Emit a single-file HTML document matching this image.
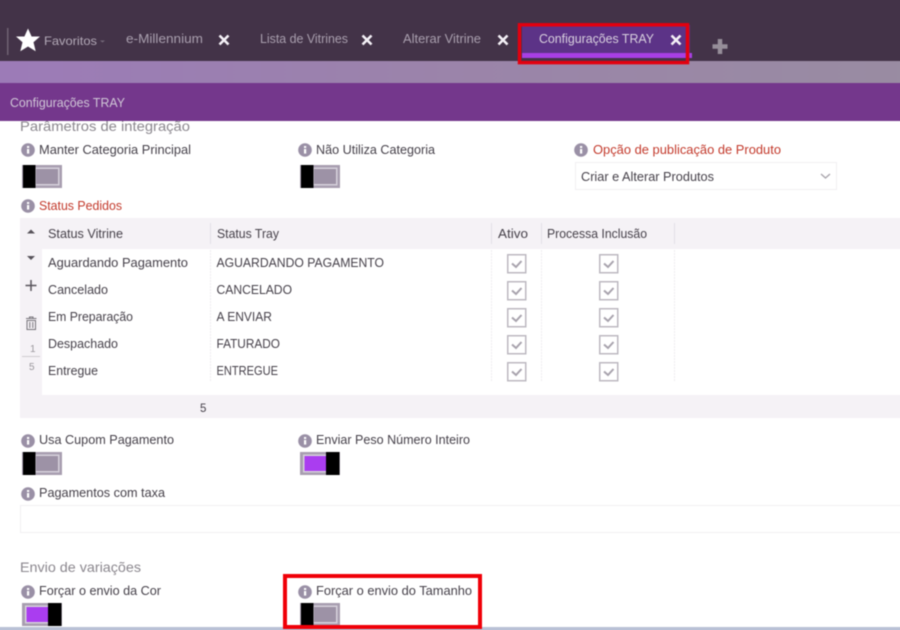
<!DOCTYPE html>
<html lang="pt"><head><meta charset="utf-8"><title>Configurações TRAY</title>
<style>
html,body{margin:0;padding:0;background:#fff;width:900px;height:630px;overflow:hidden}
svg{display:block;overflow:hidden}
.b{filter:blur(.45px)}
text{font-family:"Liberation Sans",sans-serif;font-size:12.5px;fill:#46414a}
.r{fill:#c33a2c}
.h{font-size:14px;fill:#8b878e}
.w{fill:#cfc6d6}
</style></head><body>
<svg width="900" height="630" viewBox="0 0 900 630" xmlns="http://www.w3.org/2000/svg">
<defs>
<linearGradient id="band" x1="0" x2="1" y1="0" y2="0"><stop offset="0" stop-color="#9c7bb8"/><stop offset=".5" stop-color="#9b84aa"/><stop offset="1" stop-color="#998ca2"/></linearGradient>
<g id="i"><circle r="6.800" fill="#9a90a6"/><rect x="-1" y="-1" width="2.200" height="4.600" fill="#fff"/><rect x="-1" y="-4" width="2.200" height="2" fill="#fff"/></g>
<g id="off"><rect width="40" height="23" fill="#a89eb0"/><rect x="12" y="2.500" width="25.500" height="18" fill="#d5d0da"/><rect x="14" y="4" width="22" height="15" fill="#9d92a6"/><rect x="1" y="0" width="12.500" height="23" fill="#000"/></g>
<g id="on"><rect width="40" height="23" fill="#a89eb0"/><rect x="3" y="2.500" width="26" height="18" fill="#d5d0da"/><rect x="4.500" y="4" width="22" height="15" fill="#aa3df0"/><rect x="26" y="0" width="13.500" height="23" fill="#000"/></g>
<g id="c"><rect x=".75" y=".75" width="18" height="18" fill="#fff" stroke="#bdb9c1" stroke-width="1.500"/><path d="M5 9.500l4 3.500 5.500-6" fill="none" stroke="#a8a3ad" stroke-width="2"/></g>
<path id="x" d="M-4.500-4.500L4.500 4.500M4.500-4.500L-4.500 4.500" fill="none" stroke="#f4f0f6" stroke-width="2.600"/>
</defs>
<g class="b">
<rect x="-10" y="-10" width="920" height="650" fill="#fff"/>
<rect x="-10" y="-10" width="920" height="71" fill="#433348"/>
<rect x="-10" y="61" width="920" height="22" fill="url(#band)"/>
<rect x="7" y="28" width="1.500" height="27" fill="#6f6272"/>
<path d="M28 28.500l3.600 8h8.400l-6.500 5.800 2.200 9-7.700-4.800-7.700 4.800 2.200-9-6.500-5.800h8.400z" fill="#fff"/>
<text x="44" y="45" textLength="53" lengthAdjust="spacingAndGlyphs" style="fill:#b3a9b7;font-size:12px">Favoritos</text>
<path d="M100 40.500h5l-2.500 2z" fill="#75697a"/>
<text x="126" y="43" textLength="77" lengthAdjust="spacingAndGlyphs" style="fill:#a99fae">e-Millennium</text>
<use href="#x" x="224" y="40"/>
<text x="260" y="43" textLength="88" lengthAdjust="spacingAndGlyphs" style="fill:#a99fae">Lista de Vitrines</text>
<use href="#x" x="367" y="40"/>
<text x="403" y="43" textLength="78" lengthAdjust="spacingAndGlyphs" style="fill:#a99fae">Alterar Vitrine</text>
<use href="#x" x="503" y="40"/>
<rect x="522" y="25" width="168" height="33" fill="#5c3387"/>
<rect x="522" y="53" width="170" height="5" fill="#a73fe4"/>
<text x="539" y="43" textLength="115" lengthAdjust="spacingAndGlyphs" style="fill:#d8d0de">Configurações TRAY</text>
<use href="#x" x="676" y="40"/>
<rect x="519.500" y="24.800" width="168" height="37.800" fill="none" stroke="#e3000f" stroke-width="3.500"/>
<path d="M720 39v15M712.500 46.500h15" stroke="#968e99" stroke-width="4.500" fill="none"/>

<text class="h" x="20" y="131" textLength="170" lengthAdjust="spacingAndGlyphs">Parâmetros de integração</text>
<rect x="-10" y="83" width="920" height="38" fill="#74378c"/>
<text x="10" y="107" textLength="115" lengthAdjust="spacingAndGlyphs" class="w">Configurações TRAY</text>

<use href="#i" x="28" y="150"/><text x="39" y="154" textLength="152" lengthAdjust="spacingAndGlyphs">Manter Categoria Principal</text>
<use href="#i" x="305" y="150"/><text x="316" y="154" textLength="119" lengthAdjust="spacingAndGlyphs">Não Utiliza Categoria</text>
<use href="#i" x="581" y="150"/><text class="r" x="593" y="154" textLength="188" lengthAdjust="spacingAndGlyphs">Opção de publicação de Produto</text>
<use href="#off" x="22" y="165"/><use href="#off" x="300" y="165"/>
<rect x="575.500" y="162.500" width="261" height="27" fill="#fff" stroke="#f1eff2"/>
<text x="581" y="181" textLength="133" lengthAdjust="spacingAndGlyphs">Criar e Alterar Produtos</text>
<path d="M821 174l4.500 4 4.500-4" fill="none" stroke="#a7a3aa" stroke-width="1.300"/>

<use href="#i" x="28" y="206"/><text class="r" x="39" y="210" textLength="83" lengthAdjust="spacingAndGlyphs">Status Pedidos</text>

<rect x="20" y="218" width="890" height="200" fill="#f5f2f6"/>
<rect x="42" y="249" width="868" height="146" fill="#fff"/>
<g fill="#e3dfe6"><rect x="210" y="223" width="1" height="21"/><rect x="491" y="223" width="1" height="21"/><rect x="541" y="223" width="1" height="21"/><rect x="674" y="223" width="1" height="21"/></g>
<g stroke="#eeecef" stroke-dasharray="2 1"><path d="M210.500 250v132M491.500 250v132M541.500 250v132M674.500 250v132"/></g>
<text x="48" y="238" textLength="75" lengthAdjust="spacingAndGlyphs">Status Vitrine</text>
<text x="217" y="238" textLength="62" lengthAdjust="spacingAndGlyphs">Status Tray</text>
<text x="498" y="238" textLength="30" lengthAdjust="spacingAndGlyphs">Ativo</text>
<text x="547" y="238" textLength="100" lengthAdjust="spacingAndGlyphs">Processa Inclusão</text>

<text x="48" y="267" textLength="140" lengthAdjust="spacingAndGlyphs">Aguardando Pagamento</text><text x="216.500" y="267" textLength="167.500" lengthAdjust="spacingAndGlyphs">AGUARDANDO PAGAMENTO</text>
<text x="48" y="294" textLength="60" lengthAdjust="spacingAndGlyphs">Cancelado</text><text x="216.500" y="294" textLength="75.500" lengthAdjust="spacingAndGlyphs">CANCELADO</text>
<text x="48" y="321" textLength="85" lengthAdjust="spacingAndGlyphs">Em Preparação</text><text x="216.500" y="321" textLength="55.500" lengthAdjust="spacingAndGlyphs">A ENVIAR</text>
<text x="48" y="348" textLength="70" lengthAdjust="spacingAndGlyphs">Despachado</text><text x="216.500" y="348" textLength="63.500" lengthAdjust="spacingAndGlyphs">FATURADO</text>
<text x="48" y="375" textLength="50" lengthAdjust="spacingAndGlyphs">Entregue</text><text x="216.500" y="375" textLength="61.500" lengthAdjust="spacingAndGlyphs">ENTREGUE</text>

<use href="#c" x="507" y="254"/><use href="#c" x="599" y="254"/>
<use href="#c" x="507" y="281"/><use href="#c" x="599" y="281"/>
<use href="#c" x="507" y="308"/><use href="#c" x="599" y="308"/>
<use href="#c" x="507" y="335"/><use href="#c" x="599" y="335"/>
<use href="#c" x="507" y="362"/><use href="#c" x="599" y="362"/>

<path d="M27 233.500l4-4 4 4z" fill="#57525a"/>
<path d="M27 256h8l-4 4z" fill="#57525a"/>
<path d="M31 280v11M25.500 285.500h11" stroke="#57525a" stroke-width="1.500" fill="none"/>
<path d="M27 320.500h8.500v9h-8.500zM26 318.500h10.500M29.500 318.500v-1.500h3.500v1.500M29.800 322v6M32.800 322v6" fill="none" stroke="#77737a" stroke-width="1"/>
<text x="30" y="352" style="font-size:10px;fill:#9a979c">1</text>
<rect x="22" y="356" width="18" height="1" fill="#cfccd1"/>
<text x="29" y="370" style="font-size:10px;fill:#9a979c">5</text>
<text x="200" y="412" style="font-size:11.500px;fill:#46414a">5</text>

<use href="#i" x="28" y="441"/><text x="39" y="444" textLength="135" lengthAdjust="spacingAndGlyphs">Usa Cupom Pagamento</text>
<use href="#i" x="305" y="441"/><text x="316" y="444" textLength="154" lengthAdjust="spacingAndGlyphs">Enviar Peso Número Inteiro</text>
<use href="#off" x="22" y="452"/><use href="#on" x="300" y="452"/>

<use href="#i" x="28" y="494"/><text x="39" y="497" textLength="126" lengthAdjust="spacingAndGlyphs">Pagamentos com taxa</text>
<rect x="20.500" y="505.500" width="895" height="27" fill="#fff" stroke="#f1eff2"/>

<text class="h" x="20" y="572" textLength="121" lengthAdjust="spacingAndGlyphs">Envio de variações</text>
<use href="#i" x="28" y="592"/><text x="39" y="595" textLength="122" lengthAdjust="spacingAndGlyphs">Forçar o envio da Cor</text>
<use href="#i" x="305" y="592"/><text x="316" y="595" textLength="156" lengthAdjust="spacingAndGlyphs">Forçar o envio do Tamanho</text>
<use href="#on" x="22" y="603"/><use href="#off" x="300" y="603"/>

<rect x="-10" y="627" width="920" height="13" fill="#b9c1d6"/>
<rect x="285" y="576" width="195" height="51" fill="none" stroke="#f00008" stroke-width="4"/>
</g>
</svg>
</body></html>
